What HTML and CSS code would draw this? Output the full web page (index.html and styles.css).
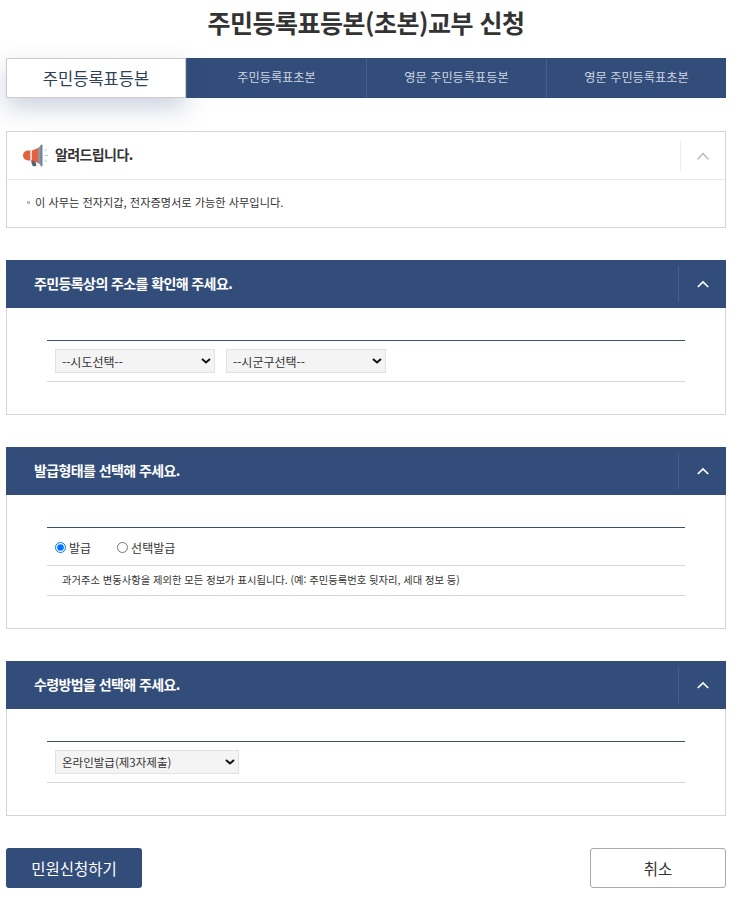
FILE: index.html
```html
<!DOCTYPE html>
<html lang="ko">

<head>
    <meta charset="utf-8">
    <title>주민등록표등본(초본)교부 신청</title>
    <link rel="stylesheet" href="styles.css">
</head>

<body>
    <div class="wrap">
        <h1 class="page-title">주민등록표등본(초본)교부 신청</h1>

        <!-- Tabs -->
        <ul class="tabs">
            <li class="tab active">주민등록표등본</li>
            <li class="tab">주민등록표초본</li>
            <li class="tab">영문 주민등록표등본</li>
            <li class="tab">영문 주민등록표초본</li>
        </ul>

        <!-- Notice -->
        <div class="notice">
            <div class="notice-head">
                <svg class="notice-icon" width="26" height="24" viewBox="0 0 26 24">
                    <path d="M7.500 15h4l1.800 5.500a1.300 1.300 0 0 1-1.200 1.700h-1.400a1.500 1.500 0 0 1-1.400-1z" fill="#56626f"/>
                    <path d="M5 6.500h2.500v10H5a5 5 0 0 1 0-10z" fill="#e4603f"/>
                    <rect x="7.500" y="6.500" width="1.500" height="10" fill="#f3d9cf"/>
                    <path d="M9 6.500l6-2.500v15l-6-2.500z" fill="#e4603f"/>
                    <path d="M15 4l3-2.500v20l-3-2.500z" fill="#8d97a3"/>
                    <rect x="17.500" y="0.500" width="2" height="22" rx="1" fill="#76828f"/>
                    <path d="M21.500 7l2.500-2M22 11.500h3M21.500 16l2.500 2" stroke="#a9c6d8" stroke-width="1" fill="none"/>
                </svg>
                <h2 class="notice-title">알려드립니다.</h2>
                <div class="toggle toggle-light">
                    <svg width="14" height="8" viewBox="0 0 14 8"><path d="M1.500 7.500L7 1.500l5.500 6" fill="none" stroke="#b4b4b4" stroke-width="1.200"/></svg>
                </div>
            </div>
            <p class="notice-text">이 사무는 전자지갑, 전자증명서로 가능한 사무입니다.</p>
        </div>

        <!-- Address -->
        <section class="panel">
            <div class="panel-head">
                <h2>주민등록상의 주소를 확인해 주세요.</h2>
                <div class="toggle">
                    <svg width="14" height="9" viewBox="0 0 14 9"><path d="M1.800 7L7 2l5.200 5" fill="none" stroke="#fff" stroke-width="1.700"/></svg>
                </div>
            </div>
            <div class="panel-body">
                <div class="row">
                    <select class="select select-area"><option>--시도선택--</option></select>
                    <select class="select select-area"><option>--시군구선택--</option></select>
                </div>
            </div>
        </section>

        <!-- Issue type -->
        <section class="panel">
            <div class="panel-head">
                <h2>발급형태를 선택해 주세요.</h2>
                <div class="toggle">
                    <svg width="14" height="9" viewBox="0 0 14 9"><path d="M1.800 7L7 2l5.200 5" fill="none" stroke="#fff" stroke-width="1.700"/></svg>
                </div>
            </div>
            <div class="panel-body">
                <div class="row radio-row">
                    <label class="radio"><input type="radio" name="issue" checked>발급</label>
                    <label class="radio"><input type="radio" name="issue">선택발급</label>
                </div>
                <p class="row-note">과거주소 변동사항을 제외한 모든 정보가 표시됩니다. (예: 주민등록번호 뒷자리, 세대 정보 등)</p>
            </div>
        </section>

        <!-- Receive method -->
        <section class="panel">
            <div class="panel-head">
                <h2>수령방법을 선택해 주세요.</h2>
                <div class="toggle">
                    <svg width="14" height="9" viewBox="0 0 14 9"><path d="M1.800 7L7 2l5.200 5" fill="none" stroke="#fff" stroke-width="1.700"/></svg>
                </div>
            </div>
            <div class="panel-body">
                <div class="row">
                    <select class="select select-method"><option>온라인발급(제3자제출)</option></select>
                </div>
            </div>
        </section>

        <div class="buttons">
            <button type="button" class="btn btn-primary">민원신청하기</button>
            <button type="button" class="btn btn-cancel">취소</button>
        </div>
    </div>
</body>
</html>
```
FILE: styles.css
```css
/* Base */
body {
    margin: 0;
    padding: 0;
    background-color: #fff;
    color: #222;
    font-family: "Noto Sans CJK KR", "Noto Sans", sans-serif;
}

.wrap {
    width: 720px;
    margin-left: 6px;
}

.page-title {
    height: 58px;
    margin: 0;
    color: #333;
    font-size: 25px;
    font-weight: 700;
    line-height: 45px;
    letter-spacing: -0.5px;
    text-align: center;
}

/* Tabs */
.tabs {
    display: flex;
    height: 40px;
    margin: 0 0 33px;
    padding: 0;
    list-style: none;
    background-color: #324d7a;
}

.tab {
    width: 180px;
    box-sizing: border-box;
    border-left: 1px solid #47608a;
    color: #cfd6e2;
    font-size: 12.200px;
    line-height: 38px;
    text-align: center;
}

.tab.active {
    border: 1px solid #ccc;
    background-color: #fff;
    box-shadow: 0 10px 24px rgba(50, 77, 122, 0.25);
    color: #2e3f58;
    font-size: 16.500px;
}

/* Notice */
.notice {
    height: 97px;
    margin-bottom: 32px;
    box-sizing: border-box;
    border: 1px solid #d5d5d5;
}

.notice-head {
    display: flex;
    align-items: center;
    height: 47px;
    padding-left: 16px;
    border-bottom: 1px solid #e8e8e8;
}

.notice-icon {
    margin-right: 6px;
}

.notice-title {
    flex: 1;
    margin: 0 0 3px;
    color: #333;
    font-size: 14px;
    font-weight: 700;
    letter-spacing: -0.6px;
}

.toggle {
    display: flex;
    align-items: center;
    justify-content: center;
    width: 47px;
    height: 36px;
    border-left: 1px solid #47608a;
}

.toggle-light {
    height: 32px;
    width: 44px;
    border-left-color: #eee;
}

.notice-text {
    margin: 14px 0 0 20px;
    position: relative;
    padding-left: 8px;
    color: #333;
    font-size: 11.200px;
    line-height: 16px;
}

.notice-text::before {
    content: "";
    position: absolute;
    left: 0;
    top: 7px;
    width: 3px;
    height: 3px;
    background-color: #bbb;
}

/* Panels */
.panel {
    margin-bottom: 32px;
    border: 1px solid #d5d5d5;
    border-top: none;
}

.panel-head {
    display: flex;
    align-items: center;
    justify-content: space-between;
    height: 48px;
    margin: 0 -1px;
    padding-left: 28px;
    background-color: #324d7a;
}

.panel-head h2 {
    margin: 0 0 3px;
    color: #fff;
    font-size: 14px;
    font-weight: 700;
    letter-spacing: -0.6px;
}

.panel-body {
    margin: 32px 40px;
    border-top: 1px solid #3d5068;
}

.row {
    display: flex;
    align-items: center;
    gap: 11px;
    padding: 8px 8px;
    border-bottom: 1px solid #d5d5d5;
}

.select {
    height: 24px;
    box-sizing: border-box;
    padding: 0 6px;
    border: 1px solid #e2e2e2;
    background: #f4f4f4 url("data:image/svg+xml,%3Csvg xmlns='http://www.w3.org/2000/svg' width='10' height='6'%3E%3Cpath d='M1 1l4 3.500L9 1' fill='none' stroke='%23111' stroke-width='2'/%3E%3C/svg%3E") no-repeat right 3px center;
    appearance: none;
    color: #333;
    font-family: "Noto Sans CJK KR", sans-serif;
    font-size: 12px;
}

.select-area {
    width: 160px;
}

.select-method {
    width: 184px;
    font-size: 11.500px;
}

.radio-row {
    gap: 26px;
    height: 38px;
    box-sizing: border-box;
    padding-top: 2px;
    padding-bottom: 0;
}

.radio {
    display: flex;
    align-items: center;
    color: #333;
    font-size: 12px;
}

.radio input {
    width: 11px;
    height: 11px;
    margin: 0 3px 0 0;
}

.row-note {
    height: 29px;
    margin: 0;
    padding-left: 15px;
    border-bottom: 1px solid #d5d5d5;
    color: #333;
    font-size: 10.300px;
    line-height: 28px;
}

/* Buttons */
.buttons {
    display: flex;
    justify-content: space-between;
}

.btn {
    width: 136px;
    height: 40px;
    border-radius: 3px;
    font-family: "Noto Sans CJK KR", sans-serif;
    font-size: 15.500px;
}

.btn-primary {
    border: none;
    background-color: #324d7a;
    color: #fff;
}

.btn-cancel {
    border: 1px solid #aaa;
    background-color: #fff;
    color: #333;
}
```
